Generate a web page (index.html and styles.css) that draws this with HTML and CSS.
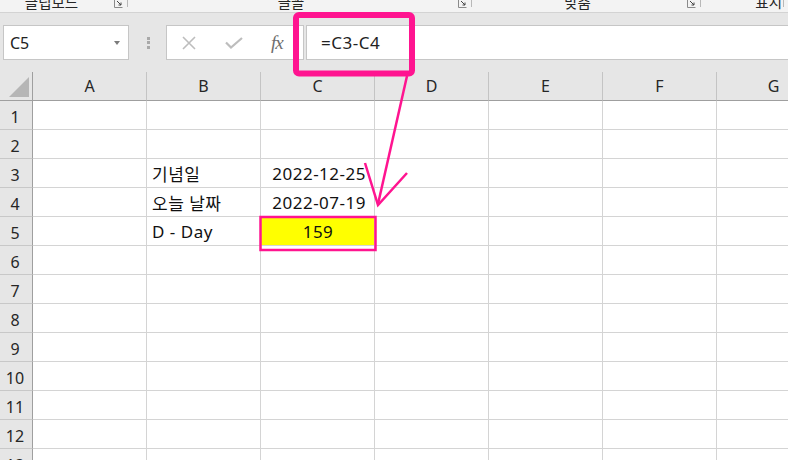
FILE: index.html
```html
<!DOCTYPE html>
<html lang="ko">
<head>
    <meta charset="UTF-8">
    <meta name="viewport" content="width=device-width, initial-scale=1.0">
    <title>D-Day</title>
    <link rel="stylesheet" href="styles.css">
</head>
<body>

    <div class="ribbon">
        <div class="group group-clipboard">
            <span class="group-label">클립보드</span>
            <svg class="launcher" width="9" height="8" viewBox="0 0 9 8"><path d="M0.5 0v7.5h8" fill="none" stroke="#8a8a8a"/><path d="M3 1l4 4M7 2.5V5H4.5" fill="none" stroke="#444"/></svg>
            <span class="sep"></span>
        </div>
        <div class="group group-font">
            <span class="group-label">글꼴</span>
            <svg class="launcher" width="9" height="8" viewBox="0 0 9 8"><path d="M0.5 0v7.5h8" fill="none" stroke="#8a8a8a"/><path d="M3 1l4 4M7 2.5V5H4.5" fill="none" stroke="#444"/></svg>
            <span class="sep"></span>
        </div>
        <div class="group group-align">
            <span class="group-label">맞춤</span>
            <svg class="launcher" width="9" height="8" viewBox="0 0 9 8"><path d="M0.5 0v7.5h8" fill="none" stroke="#8a8a8a"/><path d="M3 1l4 4M7 2.5V5H4.5" fill="none" stroke="#444"/></svg>
            <span class="sep"></span>
        </div>
        <div class="group group-number">
            <span class="group-label">표시</span>
            <span class="sep"></span>
        </div>
    </div>

    <div class="formula-bar">
        <div class="name-box">
            <span>C5</span>
            <span class="caret"></span>
        </div>
        <div class="grip"><i></i><i></i><i></i></div>
        <div class="fx-box">
            <svg class="btn-cancel" width="14" height="14" viewBox="0 0 14 14"><path d="M1 1l12 12M13 1L1 13" stroke="#bdbdbd" stroke-width="1.6"/></svg>
            <svg class="btn-enter" width="18" height="12" viewBox="0 0 18 12"><path d="M1 5.5l5 5L17 1" fill="none" stroke="#bdbdbd" stroke-width="2.2"/></svg>
            <span class="btn-fx"><i>f</i><i>x</i></span>
        </div>
        <div class="formula-input">=C3-C4</div>
    </div>

    <div class="sheet" id="sheet">
        <!-- headers and cells are filled in below -->
    </div>

    <svg class="marks" width="788" height="460" viewBox="0 0 788 460">
        <rect x="296" y="15" width="116" height="58.5" rx="3" fill="none" stroke="#ff1490" stroke-width="6"/>
        <line x1="407" y1="76" x2="378" y2="204" stroke="#ff1490" stroke-width="2.5"/>
        <polyline points="365,163 378,205 407,173" fill="none" stroke="#ff1490" stroke-width="2.5"/>
        <rect x="260.5" y="217" width="115" height="33" fill="none" stroke="#ff1490" stroke-width="2.5"/>
    </svg>

    <script>
        const columns = ["A", "B", "C", "D", "E", "F", "G"];
        const rowCount = 13;

        // Cell values, keyed by address
        const cells = {
            B3: { text: "기념일" },
            C3: { text: "2022-12-25", align: "right" },
            B4: { text: "오늘 날짜" },
            C4: { text: "2022-07-19", align: "right" },
            B5: { text: "D - Day" },
            C5: { text: "159", align: "center", fill: true }
        };

        function buildSheet() {
            const sheet = document.getElementById("sheet");

            const corner = document.createElement("div");
            corner.className = "corner";
            corner.innerHTML = '<svg width="20" height="20" viewBox="0 0 20 20"><polygon points="20,0 20,20 0,20" fill="#b6b6b6"/></svg>';
            sheet.appendChild(corner);

            columns.forEach(col => {
                const head = document.createElement("div");
                head.className = "col-head";
                head.textContent = col;
                sheet.appendChild(head);
            });

            for (let r = 1; r <= rowCount; r++) {
                const rowHead = document.createElement("div");
                rowHead.className = "row-head";
                rowHead.textContent = r;
                sheet.appendChild(rowHead);

                columns.forEach(col => {
                    const cell = document.createElement("div");
                    const data = cells[col + r];
                    cell.className = "cell";
                    if (data) {
                        cell.textContent = data.text;
                        if (data.align) cell.classList.add("align-" + data.align);
                        if (data.fill) cell.classList.add("highlight");
                    }
                    sheet.appendChild(cell);
                });
            }
        }

        buildSheet();
    </script>

</body>
</html>
```

FILE: styles.css
```css
body {
    margin: 0;
    width: 788px;
    height: 460px;
    overflow: hidden;
    position: relative;
    background-color: #fff;
    font-family: "Noto Sans", "Noto Sans CJK KR", sans-serif;
    color: #1f1f1f;
}

/* ribbon group labels, cut off at the top */
.ribbon {
    height: 12px;
    display: flex;
    overflow: hidden;
    background-color: #f3f3f3;
    border-bottom: 1px solid #d3d3d3;
}

.group {
    display: flex;
    align-items: flex-start;
    flex: none;
}

.group-clipboard { width: 128px; }
.group-font { width: 344px; }
.group-align { width: 229px; }
.group-number { width: 83px; }

.group-clipboard .group-label { padding-right: 7px; }

.group-label {
    flex: 1;
    text-align: center;
    font-size: 14.5px;
    line-height: 15px;
    margin-top: -5px;
    color: #262626;
    white-space: nowrap;
}

.group-number .group-label {
    text-align: right;
    padding-right: 1px;
}

.launcher {
    margin: 0 4px 0 4px;
}

.sep {
    width: 1px;
    height: 7px;
    background-color: #b8b8b8;
}

/* formula bar */
.formula-bar {
    display: flex;
    align-items: center;
    height: 59px;
    box-sizing: border-box;
    padding: 12px 0;
    background-color: #e6e6e6;
}

.name-box,
.fx-box,
.formula-input {
    height: 35px;
    box-sizing: border-box;
    border: 1px solid #c6c6c6;
    background-color: #fff;
    display: flex;
    align-items: center;
}

.name-box {
    margin-left: 3px;
    width: 126px;
    padding: 0 8px 0 6px;
    font-size: 16px;
    color: #222;
}

.caret {
    margin-left: auto;
    border-top: 4px solid #7b7b7b;
    border-left: 3.5px solid transparent;
    border-right: 3.5px solid transparent;
}

.grip {
    display: flex;
    flex-direction: column;
    gap: 1.5px;
    margin: 0 16px 0 18px;
}

.grip i {
    width: 3px;
    height: 3px;
    background-color: #a9a9a9;
}

.fx-box {
    width: 138px;
    padding-left: 15px;
}

.btn-enter {
    margin-left: 29px;
}

.btn-fx {
    margin-left: 28px;
    font-family: "Liberation Serif", serif;
    font-size: 19px;
    color: #6e6e6e;
    letter-spacing: -1px;
}

.formula-input {
    flex: 1;
    margin-left: 2px;
    border-right: none;
    padding-left: 14px;
    font-size: 17px;
    letter-spacing: 0.5px;
    color: #222;
}

/* worksheet */
.sheet {
    display: grid;
    grid-template-columns: 33px repeat(7, 114px);
    grid-auto-rows: 29px;
}

.corner,
.col-head,
.row-head {
    background-color: #e6e6e6;
    box-sizing: border-box;
    display: flex;
    font-size: 16px;
    color: #262626;
}

.corner {
    justify-content: flex-end;
    align-items: flex-end;
    padding: 0 3px 3px 0;
    border-right: 1px solid #9f9f9f;
    border-bottom: 1px solid #9f9f9f;
}

.col-head {
    align-items: center;
    justify-content: center;
    border-right: 1px solid #c4c4c4;
    border-bottom: 1px solid #9f9f9f;
}

.row-head {
    align-items: center;
    justify-content: center;
    padding: 3px 2px 0 0;
    border-right: 1px solid #9f9f9f;
    border-bottom: 1px solid #c8c8c8;
}

.cell {
    box-sizing: border-box;
    display: flex;
    align-items: center;
    padding: 1px 4px 0 5px;
    border-right: 1px solid #d4d4d4;
    border-bottom: 1px solid #d4d4d4;
    font-size: 17px;
    letter-spacing: 0.5px;
    white-space: nowrap;
    color: #111;
}

.align-right { justify-content: flex-end; padding-right: 8px; }
.align-center { justify-content: center; }

.highlight {
    background-color: #ffff00;
}

.marks {
    position: absolute;
    top: 0;
    left: 0;
    pointer-events: none;
}
```
